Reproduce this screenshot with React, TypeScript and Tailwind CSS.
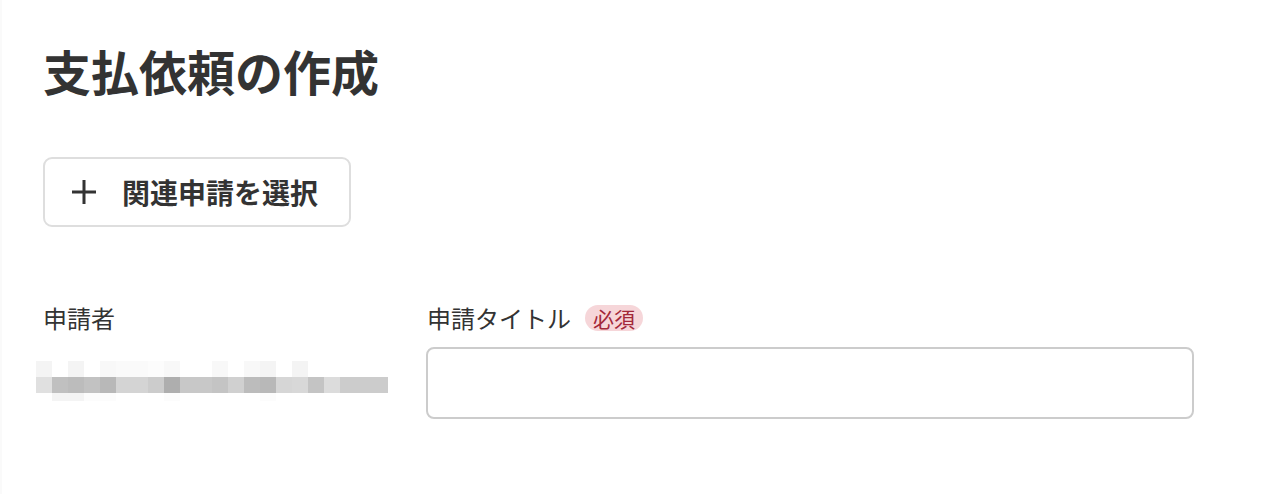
import React from "react";

const font = {
  fontFamily: '"Noto Sans CJK JP", "Noto Sans", sans-serif',
};

// mosaic that hides the applicant name
const mosaic = {
  top: ["#f4f4f4", "#fff", "#f4f4f4", "#fff", "#f8f8f8", "#fafafa", "#fafafa", "#fcfcfc", "#f8f8f8", "#fff", "#fff", "#f8f8f8", "#fff", "#f8f8f8", "#f4f4f4", "#fff", "#f4f4f4", "#fff", "#fff", "#fff", "#fff", "#fff"],
  mid: ["#e0e0e0", "#c0c0c0", "#bcbcbc", "#c2c2c2", "#b8b8b8", "#d4d4d4", "#d4d4d4", "#cccccc", "#aeaeae", "#c8c8c8", "#c8c8c8", "#c4c4c4", "#d0d0d0", "#bcbcbc", "#b8b8b8", "#d6d6d6", "#d8d8d8", "#c4c4c4", "#dcdcdc", "#cccccc", "#cccccc", "#cccccc"],
  bot: ["#fff", "#f4f4f4", "#f4f4f4", "#fcfcfc", "#fcfcfc", "#fff", "#fff", "#fff", "#fcfcfc", "#fff", "#fff", "#fff", "#fff", "#fff", "#fcfcfc", "#fff", "#fff", "#fff", "#fff", "#fff", "#fff", "#fff"],
};

const Mosaic = () => (
  <svg width="352" height="40" viewBox="0 0 352 40" className="block">
    {mosaic.top.map((c, i) => (
      <rect key={"t" + i} x={i * 16} y={0} width={16} height={16} fill={c} />
    ))}
    {mosaic.mid.map((c, i) => (
      <rect key={"m" + i} x={i * 16} y={16} width={16} height={16} fill={c} />
    ))}
    {mosaic.bot.map((c, i) => (
      <rect key={"b" + i} x={i * 16} y={32} width={16} height={8} fill={c} />
    ))}
  </svg>
);

const App = () => {
  return (
    <div
      className="w-[1284px] h-[494px] bg-white text-[#333333] border-l-2 border-[#fafafa] overflow-hidden"
      style={font}
    >
      <div className="pl-[41px] pt-[40px]">
        <h1 className="text-[48px] font-bold leading-[60px]">
          支払依頼の作成
        </h1>

        <button
          type="button"
          className="mt-[57px] flex items-center w-[308px] h-[70px] rounded-[9px] border-2 border-[#dedede] bg-white pl-[26px]"
        >
          <svg width="26" height="26" viewBox="0 0 26 26" className="shrink-0">
            <path d="M13 1v24M1 13h24" stroke="#333333" strokeWidth="3" />
          </svg>
          <span className="ml-[25px] text-[28px] font-bold leading-none">
            関連申請を選択
          </span>
        </button>

        <div className="mt-[78px] flex">
          {/* applicant */}
          <div className="w-[384px] shrink-0">
            <div className="h-[26px] flex items-center text-[24px] leading-none">
              申請者
            </div>
            <div className="mt-[30px] -ml-[7px]">
              <Mosaic />
            </div>
          </div>

          {/* title */}
          <div className="w-[768px]">
            <div className="h-[26px] flex items-center">
              <span className="text-[24px] leading-none">申請タイトル</span>
              <span className="ml-[14px] h-[26px] px-[8px] flex items-center rounded-full bg-[#f6d6d9] text-[#a3283a] text-[21px] leading-none">
                必須
              </span>
            </div>
            <input
              type="text"
              className="mt-[16px] -ml-[1px] block w-[768px] h-[72px] rounded-[8px] border-2 border-[#cccccc] bg-white px-4 text-[22px] outline-none"
            />
          </div>
        </div>
      </div>
    </div>
  );
};

export default App;
